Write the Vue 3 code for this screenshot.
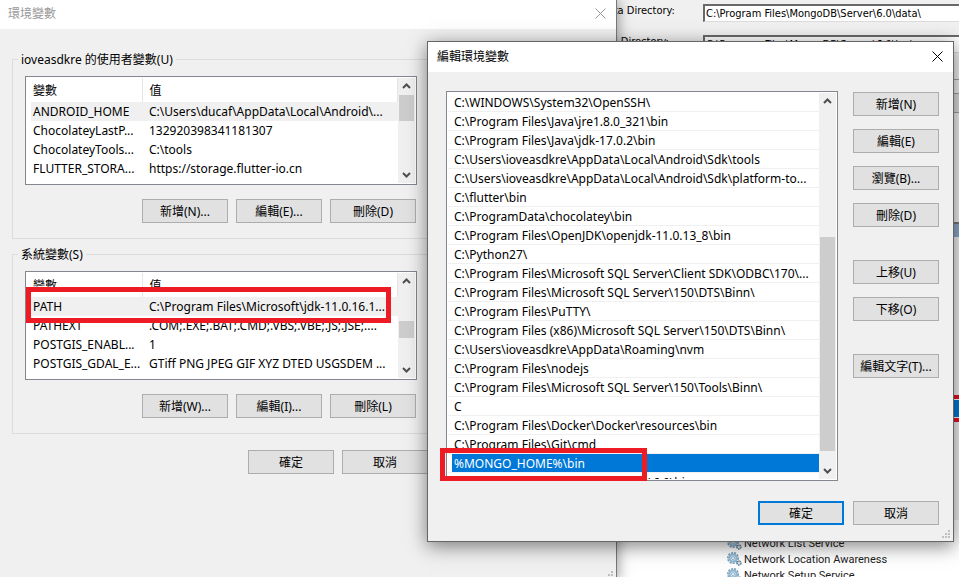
<script setup>
import { ref } from 'vue'

const userVars = [
  ['ANDROID_HOME', 'C:\\Users\\ducaf\\AppData\\Local\\Android\\...'],
  ['ChocolateyLastP...', '132920398341181307'],
  ['ChocolateyTools...', 'C:\\tools'],
  ['FLUTTER_STORA...', 'https://storage.flutter-io.cn'],
]
const systemVars = [
  ['PATH', 'C:\\Program Files\\Microsoft\\jdk-11.0.16.1...'],
  ['PATHEXT', '.COM;.EXE;.BAT;.CMD;.VBS;.VBE;.JS;.JSE;....'],
  ['POSTGIS_ENABL...', '1'],
  ['POSTGIS_GDAL_E...', 'GTiff PNG JPEG GIF XYZ DTED USGSDEM ...'],
]
const groups = [
  { legend: 'ioveasdkre 的使用者變數(U)', rows: userVars, thumb: 'thumb-top', marked: false, buttons: ['新增(N)...', '編輯(E)...', '刪除(D)'] },
  { legend: '系統變數(S)', rows: systemVars, thumb: 'thumb-mid', marked: true, buttons: ['新增(W)...', '編輯(I)...', '刪除(L)'] },
]
const paths = [
  'C:\\WINDOWS\\System32\\OpenSSH\\',
  'C:\\Program Files\\Java\\jre1.8.0_321\\bin',
  'C:\\Program Files\\Java\\jdk-17.0.2\\bin',
  'C:\\Users\\ioveasdkre\\AppData\\Local\\Android\\Sdk\\tools',
  'C:\\Users\\ioveasdkre\\AppData\\Local\\Android\\Sdk\\platform-to...',
  'C:\\flutter\\bin',
  'C:\\ProgramData\\chocolatey\\bin',
  'C:\\Program Files\\OpenJDK\\openjdk-11.0.13_8\\bin',
  'C:\\Python27\\',
  'C:\\Program Files\\Microsoft SQL Server\\Client SDK\\ODBC\\170\\...',
  'C:\\Program Files\\Microsoft SQL Server\\150\\DTS\\Binn\\',
  'C:\\Program Files\\PuTTY\\',
  'C:\\Program Files (x86)\\Microsoft SQL Server\\150\\DTS\\Binn\\',
  'C:\\Users\\ioveasdkre\\AppData\\Roaming\\nvm',
  'C:\\Program Files\\nodejs',
  'C:\\Program Files\\Microsoft SQL Server\\150\\Tools\\Binn\\',
  'C',
  'C:\\Program Files\\Docker\\Docker\\resources\\bin',
  'C:\\Program Files\\Git\\cmd',
  '%MONGO_HOME%\\bin',
  'C:\\Program Files\\MongoDB\\Server\\6.0\\bin',
]
const actionGroups = [
  ['新增(N)', '編輯(E)', '瀏覽(B)...', '刪除(D)'],
  ['上移(U)', '下移(O)'],
  ['編輯文字(T)...'],
]
const services = ['Network List Service', 'Network Location Awareness', 'Network Setup Service']
const selected = ref(19)
const dataDir = ref('C:\\Program Files\\MongoDB\\Server\\6.0\\data\\')
const logDir = ref('C:\\Program Files\\MongoDB\\Server\\6.0\\log\\')
</script>

<template>
  <main class="desktop">
    <section class="installer">
      <div class="field">
        <label for="data-dir">Data Directory:</label>
        <input id="data-dir" v-model="dataDir" type="text" />
      </div>
      <div class="field">
        <label for="log-dir">Log Directory:</label>
        <input id="log-dir" v-model="logDir" type="text" />
      </div>
      <div class="panel"></div>
      <div class="panel"></div>
      <div class="panel dark"></div>
      <div class="strip"></div>
      <div class="marker"><div></div></div>
    </section>

    <section class="services">
      <ul>
        <li v-for="s in services" :key="s">
          <svg width="15" height="14" viewBox="0 0 15 14" aria-hidden="true">
            <circle cx="6" cy="6" r="5" fill="none" stroke="#7fa3bd" stroke-width="2" stroke-dasharray="2 1" />
            <circle cx="6" cy="6" r="3.5" fill="#dcecf5" stroke="#8fbad4" stroke-width="2" />
            <circle cx="6" cy="6" r="1.5" fill="#fff" stroke="#6f93ac" stroke-width="0.7" />
            <circle cx="12" cy="11" r="2" fill="#d7e3ea" stroke="#5d7c91" stroke-width="1.5" stroke-dasharray="1.5 0.7" />
          </svg>
          {{ s }}
        </li>
      </ul>
    </section>

    <section class="window env">
      <header class="titlebar">
        <h1>環境變數</h1>
        <button class="close" aria-label="關閉">
          <svg width="11" height="11" viewBox="0 0 11 11"><path d="M0.5 0.5 10.5 10.5M10.5 0.5 0.5 10.5" /></svg>
        </button>
      </header>
      <div class="env-body">
        <fieldset v-for="g in groups" :key="g.legend">
          <legend>{{ g.legend }}</legend>
          <div class="listbox vars">
            <table>
              <thead>
                <tr><th>變數</th><th>值</th></tr>
              </thead>
              <tbody>
                <tr v-for="(r, i) in g.rows" :key="r[0]" :class="{ current: i === 0 }">
                  <td>{{ r[0] }}</td><td>{{ r[1] }}</td>
                </tr>
              </tbody>
            </table>
            <div class="scrollbar" :class="g.thumb">
              <svg class="arrow" viewBox="0 0 9 6"><path d="M1 5 4.5 1.5 8 5" /></svg>
              <div class="thumb"></div>
              <svg class="arrow down" viewBox="0 0 9 6"><path d="M1 1 4.5 4.5 8 1" /></svg>
            </div>
            <div v-if="g.marked" class="highlight"></div>
          </div>
          <div class="row">
            <button v-for="b in g.buttons" :key="b" class="btn">{{ b }}</button>
          </div>
        </fieldset>
        <footer class="row">
          <button class="btn">確定</button>
          <button class="btn">取消</button>
        </footer>
      </div>
      <svg class="grip" viewBox="0 0 9 9"><path d="M6 0h2v2h-2zM3 3h2v2h-2zM6 3h2v2h-2zM0 6h2v2h-2zM3 6h2v2h-2zM6 6h2v2h-2z" /></svg>
    </section>

    <section class="window edit">
      <header class="titlebar">
        <h1>編輯環境變數</h1>
        <button class="close" aria-label="關閉">
          <svg width="11" height="11" viewBox="0 0 11 11"><path d="M0.5 0.5 10.5 10.5M10.5 0.5 0.5 10.5" /></svg>
        </button>
      </header>
      <div class="edit-body">
        <div class="listbox paths">
          <ul>
            <li v-for="(p, i) in paths" :key="p" :class="{ selected: i === selected }" @click="selected = i">
              <span>{{ p }}</span>
            </li>
          </ul>
          <div class="scrollbar thumb-low">
            <svg class="arrow" viewBox="0 0 9 6"><path d="M1 5 4.5 1.5 8 5" /></svg>
            <div class="thumb"></div>
            <svg class="arrow down" viewBox="0 0 9 6"><path d="M1 1 4.5 4.5 8 1" /></svg>
          </div>
          <div class="highlight"></div>
        </div>
        <div class="actions">
          <div v-for="(a, i) in actionGroups" :key="i" class="action-group">
            <button v-for="b in a" :key="b" class="btn">{{ b }}</button>
          </div>
        </div>
      </div>
      <footer class="row">
        <button class="btn primary">確定</button>
        <button class="btn">取消</button>
      </footer>
      <svg class="grip" viewBox="0 0 9 9"><path d="M6 0h2v2h-2zM3 3h2v2h-2zM6 3h2v2h-2zM0 6h2v2h-2zM3 6h2v2h-2zM6 6h2v2h-2z" /></svg>
    </section>
  </main>
</template>

<style>
body { overflow: hidden; }
</style>

<style scoped>
* { box-sizing: border-box; }
.desktop {
  position: relative;
  height: 100vh;
  overflow: hidden;
  background: #f0f0f0;
  color: #000;
  font-family: "Noto Sans", "Noto Sans CJK TC", sans-serif;
  font-size: 12px;
  line-height: 17px;
}
ul { list-style: none; margin: 0; padding: 0; }
button, input { font: inherit; color: inherit; }

.installer {
  position: absolute;
  inset: 0 0 auto 600px;
  height: 540px;
  padding-top: 4px;
  font-family: "DejaVu Sans Condensed", "DejaVu Sans", sans-serif;
  font-size: 11px;
}
.field { display: flex; align-items: flex-start; height: 31px; }
.field label { width: 103px; line-height: 13px; }
.field input {
  flex: 1;
  min-width: 0;
  height: 18px;
  padding: 0 1px;
  border: 1px solid #dcdcdc;
  border-top: 2px solid #696969;
  border-left: 2px solid #696969;
  border-right: 0;
  border-radius: 0;
  background: #fff;
}
.panel { height: 14px; border-bottom: 1px solid #a0a0a0; }
.panel.dark { height: 19px; background: #dcdcdc; }
.strip { height: 15px; margin-top: 109px; border-top: 2px solid #777; background: #8ba8c8; }
.marker { height: 27px; margin-top: 158px; padding: 1px 0; border: solid #e81123; border-width: 4px 0; background: #fff; }
.marker div { height: 17px; background: #0078d7; }

.services {
  position: absolute;
  inset: 520px 0 0 616px;
  padding: 15px 0 0 111px;
  background: #fff;
  font-family: Roboto, "Noto Sans", sans-serif;
  font-size: 11px;
  color: #222;
}
.services li { display: flex; align-items: center; gap: 2px; height: 16px; white-space: nowrap; }

.window { position: absolute; background: #f0f0f0; }
.env {
  left: 0;
  top: 0;
  width: 617px;
  height: 582px;
  border-right: 1px solid #777;
  box-shadow: 2px 0 12px rgba(0, 0, 0, 0.35);
}
.edit {
  left: 427px;
  top: 41px;
  width: 527px;
  border: 1px solid #666;
  box-shadow: 0 4px 18px rgba(0, 0, 0, 0.5);
}
.titlebar { display: flex; align-items: center; justify-content: space-between; background: #fff; }
.titlebar h1 { margin: 0; font-size: 12px; font-weight: 400; line-height: 17px; }
.env .titlebar { height: 29px; padding: 0 10px 2px 8px; color: #999; }
.edit .titlebar { height: 30px; padding: 0 10px 2px 9px; }
.close { display: flex; padding: 0; border: 0; background: none; }
.close path { fill: none; stroke: currentColor; stroke-width: 1; }

.env-body { padding: 22px 12px 0; }
fieldset { margin: 0 0 7px; padding: 8px 12px 15px; border: 1px solid #dcdcdc; }
legend { margin-left: -7px; padding: 0 3px; line-height: 17px; }
.row { display: flex; gap: 8px; }
fieldset .row { margin-top: 14px; padding-left: 117px; }
.env-body footer { margin-top: 16px; padding-left: 236px; }

.listbox { position: relative; display: flex; width: 392px; padding: 1px; border: 1px solid #828790; background: #fff; }
.vars { height: 109px; }
table { flex: 1; margin-left: 4px; border-collapse: collapse; table-layout: fixed; width: 366px; height: 100px; }
th, td { height: 19px; padding: 0 0 0 2px; text-align: left; font-weight: 400; white-space: nowrap; line-height: 17px; }
th { height: 24px; border-right: 1px solid #e5e5e5; }
th:first-child { width: 111px; }
td + td, th + th { padding-left: 7px; }
.current { background: #f0f0f0; }

.scrollbar { display: flex; flex-direction: column; align-items: center; width: 17px; margin-left: auto; padding: 5px 1px 5px 0; background: #f0f0f0; }
.arrow { width: 9px; height: 6px; flex: none; }
.arrow path { fill: none; stroke: #505050; stroke-width: 2; }
.arrow.down { margin-top: auto; }
.thumb { width: 15px; background: #cdcdcd; }
.thumb-top .thumb { height: 26px; margin-top: 6px; }
.thumb-mid .thumb { height: 17px; margin-top: 37px; }
.thumb-low .thumb { height: 214px; margin-top: 133px; }

.btn {
  width: 86px;
  height: 24px;
  padding: 0;
  border: 1px solid #adadad;
  border-radius: 0;
  background: #e1e1e1;
  line-height: 17px;
  white-space: nowrap;
}
.btn.primary { border: 2px solid #0078d7; }

.edit-body { display: flex; justify-content: space-between; padding: 19px 14px 0 18px; }
.paths { height: 390px; }
.paths ul { flex: 1; height: 386px; overflow: hidden; }
.paths li { height: 19px; padding-left: 4px; border-bottom: 1px solid #f0f0f0; white-space: nowrap; }
.paths span { display: block; height: 18px; padding-left: 2px; line-height: 20px; }
.selected span { background: #0078d7; color: #fff; }
.actions { display: flex; flex-direction: column; gap: 33px; padding-top: 1px; }
.action-group { display: flex; flex-direction: column; gap: 13px; }
.edit footer { justify-content: flex-end; gap: 9px; padding: 20px 14px 16px; }

.highlight { position: absolute; border: 5px solid #ed1c24; }
.vars .highlight { inset: 15px 25px 56px 0; }
.paths .highlight { inset: 356px 190px -1px -7px; }
.grip { position: absolute; right: 2px; bottom: 2px; width: 9px; height: 9px; fill: #bfbfbf; }
</style>
